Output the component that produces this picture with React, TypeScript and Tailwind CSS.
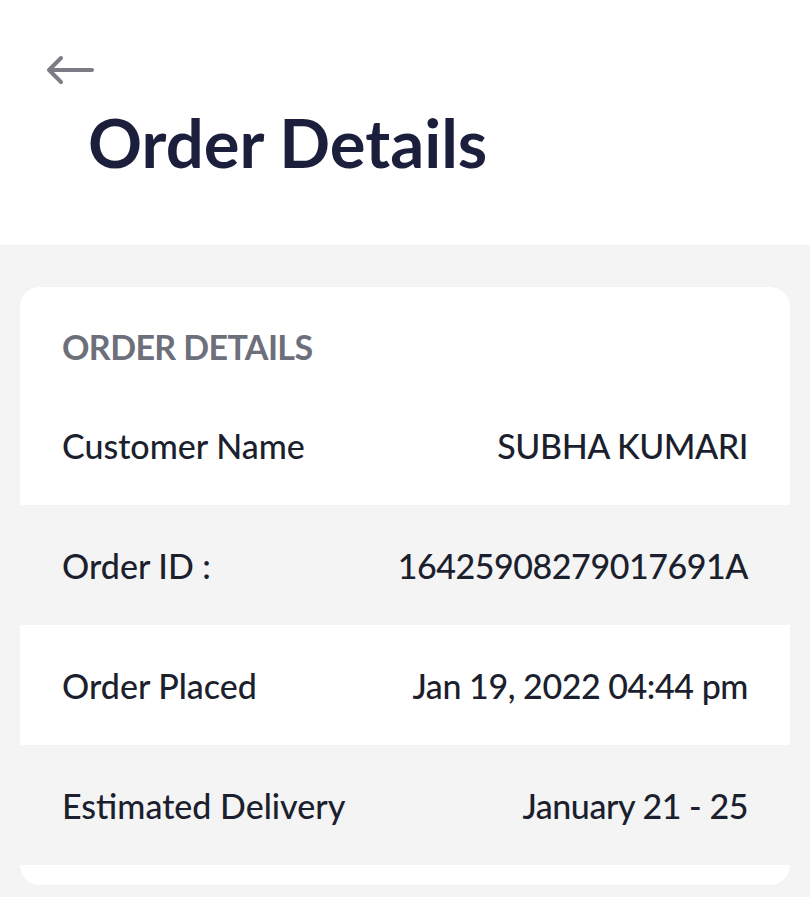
const rows = [
  { label: "Customer Name", value: "SUBHA KUMARI" },
  { label: "Order ID :", value: "16425908279017691A" },
  { label: "Order Placed", value: "Jan 19, 2022 04:44 pm" },
  { label: "Estimated Delivery", value: "January 21 - 25" },
];

function BackArrow() {
  return (
    <svg width="50" height="30" viewBox="0 0 50 30" fill="none" className="text-[#7b7c86]">
      <path
        d="M46 15H4M15 3L3 15l12 12"
        stroke="currentColor"
        strokeWidth="4"
        strokeLinecap="round"
        strokeLinejoin="round"
      />
    </svg>
  );
}

export default function App() {
  return (
    <div className="min-h-[897px] bg-[#f4f4f5] font-['Lato','Noto_Sans',sans-serif]">
      <header className="bg-white h-[245px] pt-[55px] pl-[46px]">
        <BackArrow />
        <h1 className="mt-[24px] ml-[42px] text-[67px] leading-none font-bold text-[#1b1f3b]">
          Order Details
        </h1>
      </header>

      <div className="px-[20px] pt-[42px]">
        <div className="bg-white rounded-[20px] overflow-hidden">
          <div className="h-[98px] flex items-center px-[42px] pt-[20px]">
            <h2 className="text-[34px] font-bold text-[#6d6f7b] tracking-[-0.6px]">
              ORDER DETAILS
            </h2>
          </div>
          {rows.map((row, i) => (
            <div
              key={row.label}
              className={`h-[120px] flex items-center justify-between px-[42px] text-[34px] font-medium text-[#1c1f2e] ${
                i % 2 === 1 ? "bg-[#f4f4f5]" : "bg-white"
              }`}
            >
              <span>{row.label}</span>
              <span className="tracking-[-0.45px]">{row.value}</span>
            </div>
          ))}
          <div className="h-[20px]" />
        </div>
      </div>
    </div>
  );
}
